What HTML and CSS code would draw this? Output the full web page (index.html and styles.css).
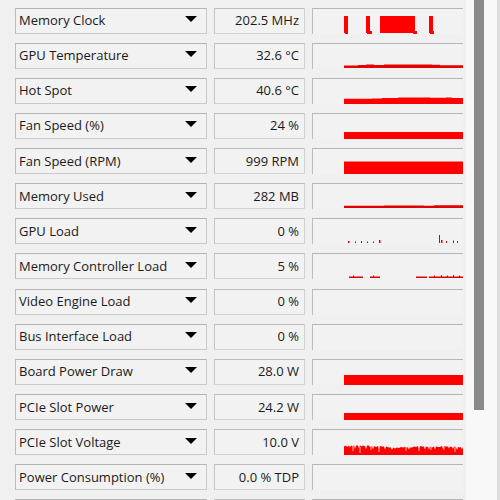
FILE: index.html
```html
<!DOCTYPE html>
<html>
<head>
<meta charset="utf-8">
<link rel="stylesheet" href="styles.css">
</head>
<body>
<div class="window">
  <div class="list">
    <div class="row">
      <div class="label"><span>Memory Clock</span><i class="arrow"></i></div>
      <div class="value">202.5 MHz</div>
      <div class="graph"><svg viewBox="0 0 150 25" width="150" height="25"><path fill="#f00" d="M31 7h4v17h-4z M32 22h3v3h-3z M53 7h4v17h-4z M54 22h5v3h-5z M67 7h35v17h-35z M100 22h4v3h-4z M116 7h4v17h-4z M117 22h4v3h-4z"/></svg></div>
    </div>
    <div class="row">
      <div class="label"><span>GPU Temperature</span><i class="arrow"></i></div>
      <div class="value">32.6 °C</div>
      <div class="graph"><svg viewBox="0 0 150 25" width="150" height="25"><path fill="#e60000" d="M31 21.5h14v-0.4h8v-0.5h8v0.3h10v-0.5h48v0.4h8v0.5h23V24H31z"/></svg></div>
    </div>
    <div class="row">
      <div class="label"><span>Hot Spot</span><i class="arrow"></i></div>
      <div class="value">40.6 °C</div>
      <div class="graph"><svg viewBox="0 0 150 25" width="150" height="25"><path fill="#f00" d="M31 19.8h28v-0.3h10v-0.5h16v-0.5h32v0.3h16v-0.4h6v0.6h11V25H31z"/></svg></div>
    </div>
    <div class="row">
      <div class="label"><span>Fan Speed (%)</span><i class="arrow"></i></div>
      <div class="value">24 %</div>
      <div class="graph"><svg viewBox="0 0 150 25" width="150" height="25"><path fill="#f00" d="M31 18h119v7H31z"/></svg></div>
    </div>
    <div class="row">
      <div class="label"><span>Fan Speed (RPM)</span><i class="arrow"></i></div>
      <div class="value">999 RPM</div>
      <div class="graph"><svg viewBox="0 0 150 25" width="150" height="25"><path fill="#f00" d="M31 12.5h119V25H31z"/></svg></div>
    </div>
    <div class="row">
      <div class="label"><span>Memory Used</span><i class="arrow"></i></div>
      <div class="value">282 MB</div>
      <div class="graph"><svg viewBox="0 0 150 25" width="150" height="25"><path fill="#e00000" d="M31 21.8h40v-0.4h40v0.3h10v-0.4h29V24H31z"/></svg></div>
    </div>
    <div class="row">
      <div class="label"><span>GPU Load</span><i class="arrow"></i></div>
      <div class="value">0 %</div>
      <div class="graph"><svg viewBox="0 0 150 25" width="150" height="25"><path fill="#e00000" d="M35 22h1.5v2H35z M42 22.5h1v1.5h-1z M48 22h1v2h-1z M54 22.5h1v1.5h-1z M60 22.5h1v1.5h-1z M66 21h1.5v3H66z M126 16h1v8h-1z M128 21h1.5v3H128z M133 22h1v2h-1z M140 21.5h1v2.5h-1z M144 22h1v2h-1z"/></svg></div>
    </div>
    <div class="row">
      <div class="label"><span>Memory Controller Load</span><i class="arrow"></i></div>
      <div class="value">5 %</div>
      <div class="graph"><svg viewBox="0 0 150 25" width="150" height="25"><path fill="#e00000" d="M36 22.5h14v1.5H36z M40 21.5h1v1h-1z M57 22.5h10v1.5H57z M60 21.5h1v1h-1z M103 22.5h11v1.5h-11z M116 22.5h34v1.5h-34z M121 21.5h1v1h-1z M128 21h1v1.5h-1z M134 21.5h1v1h-1z M140 21h1v1.5h-1z M146 21.5h1v1h-1z"/></svg></div>
    </div>
    <div class="row">
      <div class="label"><span>Video Engine Load</span><i class="arrow"></i></div>
      <div class="value">0 %</div>
      <div class="graph"></div>
    </div>
    <div class="row">
      <div class="label"><span>Bus Interface Load</span><i class="arrow"></i></div>
      <div class="value">0 %</div>
      <div class="graph"></div>
    </div>
    <div class="row">
      <div class="label"><span>Board Power Draw</span><i class="arrow"></i></div>
      <div class="value">28.0 W</div>
      <div class="graph"><svg viewBox="0 0 150 25" width="150" height="25"><path fill="#f00" d="M31 15h119v10H31z"/></svg></div>
    </div>
    <div class="row">
      <div class="label"><span>PCIe Slot Power</span><i class="arrow"></i></div>
      <div class="value">24.2 W</div>
      <div class="graph"><svg viewBox="0 0 150 25" width="150" height="25"><path fill="#f00" d="M31 18h119v7H31z"/></svg></div>
    </div>
    <div class="row">
      <div class="label"><span>PCIe Slot Voltage</span><i class="arrow"></i></div>
      <div class="value">10.0 V</div>
      <div class="graph"><svg viewBox="0 0 150 25" width="150" height="25"><path fill="#f00" d="M31 16.5l2-1 1 1.5 2-1.5 1 2 1-2 2 1 1-1.5 1 4 1-3.5 2 0 1 3 1-3 2 1 1-1.5 1 1.5 1-1 1 4 1-4 2 0 1 1.5 2-1 1 3.5 1-3.5 2 1 2-1 1 3 1-3 2 0.5 2 0 1 3 1-3 3 1 2 0 1 2.5 1-2.5 2 1 2-1 2 0.5 2-1 2 0.5 2-0.5 3 0.5 1 2 1-2 2 0 2-1 2 0.5 2-1 1 3 1-3 2 0.5 2 0 1 3 1-3 2 0.5 1 2.5 1-3 2 1 2-1 1 3 1-3 2 0.5 2 0 2-1 1 3 1-3 2 0.5 2 0 1 2 1-2 2 0.5 1 2 1-2.5 2 0.5 1 3 1-3 2 0.5 1-0.5 1 2.5 1-2.5 2 0.5H150V25H31z"/><path stroke="#f2f2f2" stroke-width="0.8" d="M40 16v5 M47 17v6 M58 16v4 M66 17v5 M79 16v3 M93 17v4 M106 16v5 M118 17v3 M131 16v4 M142 17v5"/></svg></div>
    </div>
    <div class="row">
      <div class="label"><span>Power Consumption (%)</span><i class="arrow"></i></div>
      <div class="value">0.0 % TDP</div>
      <div class="graph"></div>
    </div>
    <div class="row">
      <div class="label"></div>
      <div class="value"></div>
      <div class="graph"></div>
    </div>
  </div>
  <div class="scrollbar"><div class="thumb"></div></div>
</div>
</body>
</html>
```
FILE: styles.css
```css
html, body {
  margin: 0;
  padding: 0;
  width: 500px;
  height: 500px;
  overflow: hidden;
  background: #f0f0f0;
}

.window {
  display: flex;
  height: 500px;
  font-family: "Open Sans", "Noto Sans", sans-serif;
  font-size: 13px;
  color: #1a1a1a;
}

.list {
  width: 471px;
  display: flex;
  flex-direction: column;
  gap: 9.15px;
  padding: 7.5px 0 0 15px;
  box-sizing: border-box;
}

.row {
  display: flex;
  gap: 7px;
  height: 26px;
  flex: none;
}

.label {
  width: 192px;
  box-sizing: border-box;
  border: 1px solid #c9c9c9;
  border-top-color: #b4b4b4;
  border-left-color: #bcbcbc;
  background: #f2f2f2;
  display: flex;
  align-items: center;
  justify-content: space-between;
  padding: 0 9px 1px 3px;
}

.arrow {
  width: 0;
  height: 0;
  border-left: 6px solid transparent;
  border-right: 6px solid transparent;
  border-top: 6px solid #000;
  margin-bottom: 2px;
}

.value {
  width: 91px;
  box-sizing: border-box;
  border: 1px solid #d2d2d2;
  border-top-color: #bdbdbd;
  border-left-color: #c4c4c4;
  background: #f2f2f2;
  display: flex;
  align-items: center;
  justify-content: flex-end;
  padding: 0 5px 1px 0;
}

.graph {
  width: 151px;
  box-sizing: border-box;
  border-top: 1px solid #b6b6b6;
  border-left: 1px solid #bdbdbd;
  background: #f2f2f2;
}

.graph svg {
  display: block;
}

.scrollbar {
  width: 26px;
  height: 500px;
  background: #f8f8f8;
  border-right: 3px solid #dcdcdc;
  display: flex;
  justify-content: center;
  padding-right: 5px;
  box-sizing: content-box;
}

.thumb {
  width: 10px;
  height: 410px;
  background: #8a8a8a;
}
```
